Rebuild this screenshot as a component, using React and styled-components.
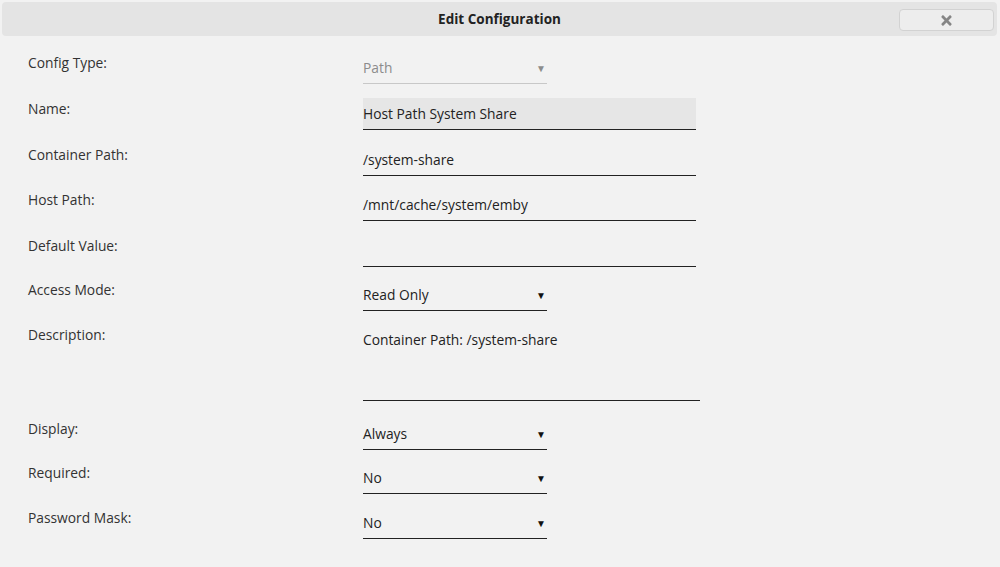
import styled, { createGlobalStyle } from "styled-components";
import { FaTimes } from "react-icons/fa";

const GlobalStyle = createGlobalStyle`
  html, body {
    margin: 0;
    padding: 0;
    background: #f2f2f2;
  }
  body {
    font-family: "Open Sans", "Noto Sans", sans-serif;
    font-size: 13.8px;
    color: #333;
  }
`;

const Dialog = styled("div")`
  width: 1000px;
  height: 567px;
  background: #f2f2f2;
  padding: 2px 3px 0 2px;
  box-sizing: border-box;
`;

const TitleBar = styled("header")`
  position: relative;
  height: 34px;
  display: flex;
  align-items: center;
  justify-content: center;
  background: #e4e4e4;
  border-radius: 4px;
  h1 {
    margin: 0;
    font-size: 13.5px;
    font-weight: 700;
    color: #222;
  }
`;

const CloseBtn = styled("button")`
  position: absolute;
  right: 3px;
  top: 7px;
  width: 95px;
  height: 22px;
  display: flex;
  align-items: center;
  justify-content: center;
  padding: 0;
  background: #ededed;
  border: 1px solid #d2d2d2;
  border-radius: 4px;
  color: #858585;
  font-size: 15px;
`;

const Form = styled("form")`
  padding: 16px 0 0 26px;
`;

const Row = styled("div")`
  display: grid;
  grid-template-columns: 335px auto;
  align-items: start;
  margin-bottom: ${(p) => p.$gap ?? 13}px;
`;

const Label = styled("label")`
  line-height: 22px;
  color: #333;
`;

const TextField = styled("div")`
  width: ${(p) => p.$width || 333}px;
  height: ${(p) => p.$height || 32}px;
  box-sizing: border-box;
  padding: 5px 0 0;
  line-height: 22px;
  color: #222;
  background: ${(p) => (p.$filled ? "#e6e6e6" : "transparent")};
  border-bottom: 1px solid #222;
`;

const Select = styled("div")`
  width: 184px;
  height: 32px;
  box-sizing: border-box;
  padding: 5px 1px 0 0;
  display: flex;
  justify-content: space-between;
  line-height: 22px;
  color: ${(p) => (p.$disabled ? "#8c8c8c" : "#222")};
  border-bottom: 1px solid ${(p) => (p.$disabled ? "#c8c8c8" : "#222")};
  span.arrow {
    font-size: 10px;
    color: ${(p) => (p.$disabled ? "#8c8c8c" : "#111")};
  }
`;

const rows = [
  { label: "Config Type:", type: "select", value: "Path", disabled: true, gap: 14 },
  { label: "Name:", type: "text", value: "Host Path System Share", filled: true, gap: 14 },
  { label: "Container Path:", type: "text", value: "/system-share" },
  { label: "Host Path:", type: "text", value: "/mnt/cache/system/emby", gap: 14 },
  { label: "Default Value:", type: "text", value: "", gap: 12 },
  { label: "Access Mode:", type: "select", value: "Read Only" },
  { label: "Description:", type: "area", value: "Container Path: /system-share", gap: 17 },
  { label: "Display:", type: "select", value: "Always", gap: 12 },
  { label: "Required:", type: "select", value: "No" },
  { label: "Password Mask:", type: "select", value: "No" },
];

export default function App() {
  return (
    <>
      <GlobalStyle />
      <Dialog>
        <TitleBar>
          <h1>Edit Configuration</h1>
          <CloseBtn type="button">
            <FaTimes />
          </CloseBtn>
        </TitleBar>
        <Form>
          {rows.map((r) => (
            <Row key={r.label} $gap={r.gap}>
              <Label>{r.label}</Label>
              {r.type === "select" ? (
                <Select $disabled={r.disabled}>
                  <span>{r.value}</span>
                  <span className="arrow">▼</span>
                </Select>
              ) : r.type === "area" ? (
                <TextField $width={337} $height={77}>
                  {r.value}
                </TextField>
              ) : (
                <TextField $filled={r.filled}>{r.value}</TextField>
              )}
            </Row>
          ))}
        </Form>
      </Dialog>
    </>
  );
}
